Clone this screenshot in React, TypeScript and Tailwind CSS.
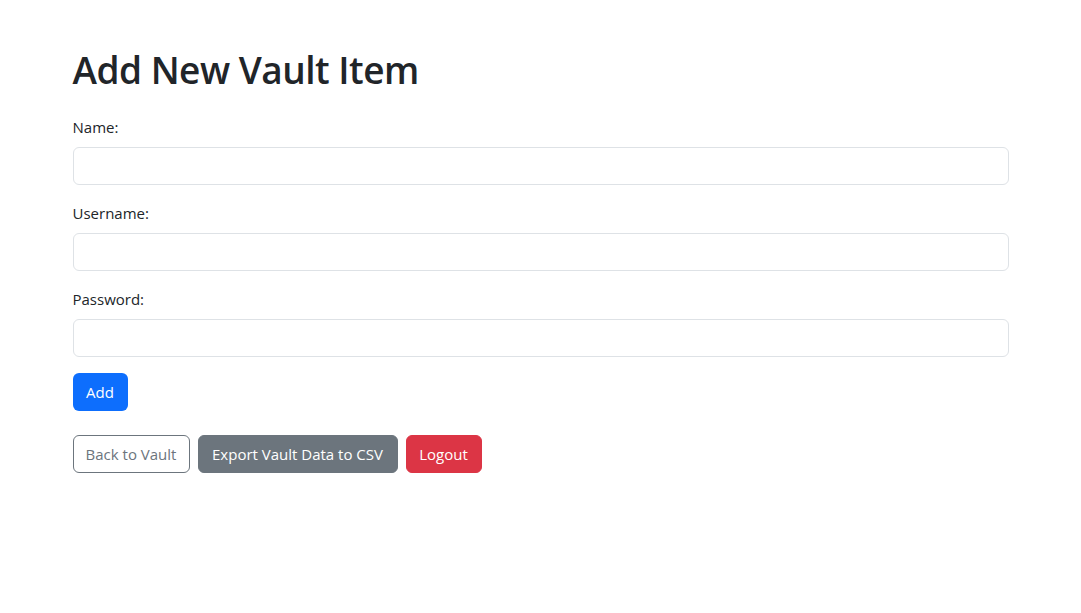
export default function App() {
  const font = { fontFamily: '"Segoe UI", "Open Sans", "Noto Sans", sans-serif' };
  return (
    <div className="min-h-[613px] bg-white text-[#212529]" style={font}>
      <div className="mx-auto w-[960px] px-3 pt-[47px]">
        <h1 className="text-[37px] font-semibold leading-[46px] mb-[22px] tracking-[-0.5px]">Add New Vault Item</h1>
        <form onSubmit={(e) => e.preventDefault()}>
          {["Name:", "Username:", "Password:"].map((l) => (
            <div key={l} className="mb-4">
              <label className="block text-[15px] leading-6 mb-2">{l}</label>
              <input
                type={l === "Password:" ? "password" : "text"}
                className="block w-full h-[38px] rounded-[6px] border border-[#dee2e6] px-3 text-base outline-none"
              />
            </div>
          ))}
          <button
            type="submit"
            className="h-[38px] w-[55px] rounded-[6px] bg-[#0d6efd] text-white text-[15px] leading-6"
          >
            Add
          </button>
        </form>
        <div className="mt-6 flex gap-2">
          <button className="h-[38px] w-[117px] rounded-[6px] border border-[#6c757d] text-[#6c757d] text-[15px] leading-6 whitespace-nowrap">
            Back to Vault
          </button>
          <button className="h-[38px] w-[200px] rounded-[6px] border border-[#6c757d] bg-[#6c757d] text-white text-[15px] leading-6 whitespace-nowrap">
            Export Vault Data to CSV
          </button>
          <button className="h-[38px] w-[76px] rounded-[6px] border border-[#dc3545] bg-[#dc3545] text-white text-[15px] leading-6 whitespace-nowrap">
            Logout
          </button>
        </div>
      </div>
    </div>
  );
}
